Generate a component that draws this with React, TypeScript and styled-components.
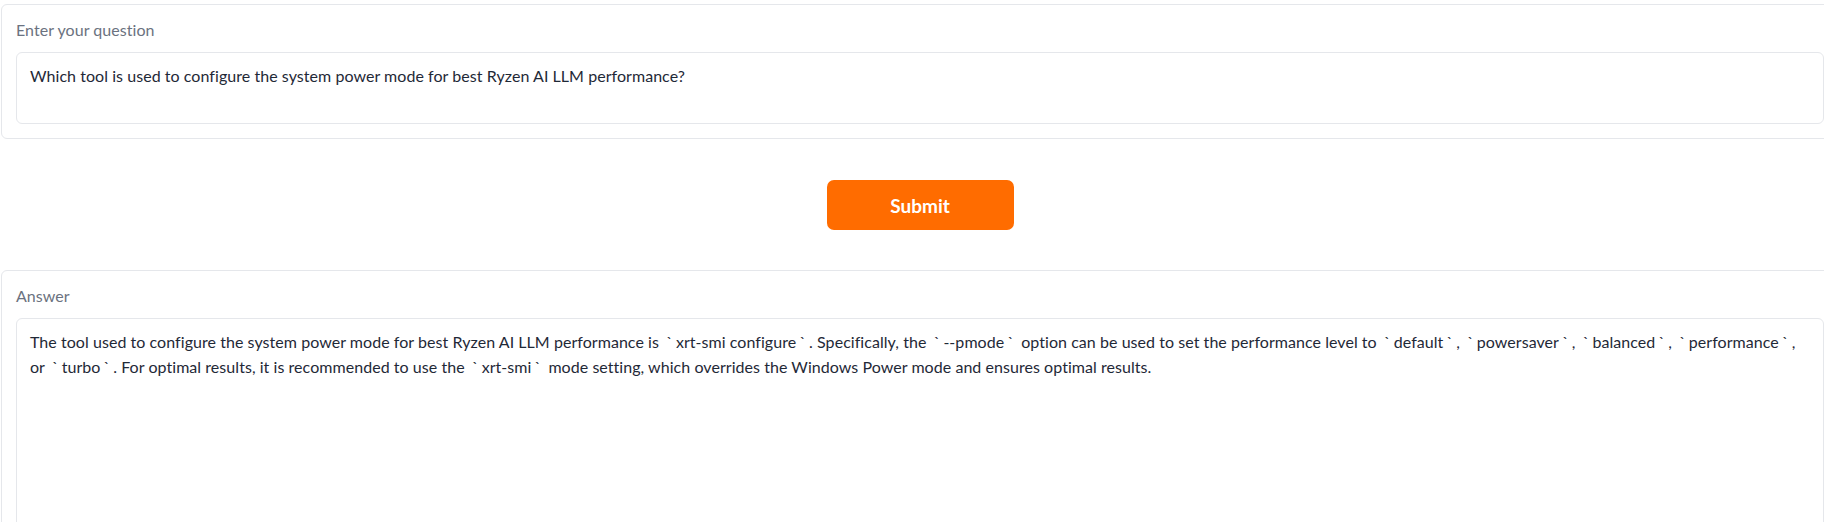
import React from "react";
import styled, { createGlobalStyle } from "styled-components";

const GlobalStyle = createGlobalStyle`
  html, body {
    margin: 0;
    padding: 0;
    background: #ffffff;
    overflow: hidden;
  }
  body {
    font-family: "Lato", "Noto Sans", sans-serif;
  }
  * { box-sizing: border-box; }
`;

const Page = styled.div`
  display: flex;
  flex-direction: column;
  width: 1838px;
  margin-left: 1px;
  padding-top: 4px;
`;

const Block = styled.div`
  display: flex;
  flex-direction: column;
  gap: 10px;
  border: 1px solid #e5e7eb;
  border-radius: 6px;
  padding: 13px 14px 14px 14px;
  background: #ffffff;
`;

const Label = styled.label`
  display: block;
  font-family: "Lato", sans-serif;
  font-size: 16px;
  letter-spacing: 0.05px;
  line-height: 24px;
  color: #6b7280;
`;

const Field = styled.div<{ $height: number }>`
  display: block;
  width: 100%;
  height: ${(p) => p.$height}px;
  margin: 0;
  padding: 10px 18px 10px 13px;
  border: 1px solid #e5e7eb;
  border-radius: 6px;
  background: #ffffff;
  font-family: "Lato", sans-serif;
  font-size: 16px;
  letter-spacing: 0.05px;
  line-height: 25px;
  color: #1f2937;
  white-space: pre-wrap;
  overflow: hidden;
`;

const Tick = styled.span`
  padding: 0 3.2px;
`;

const ButtonRow = styled.div`
  display: flex;
  justify-content: center;
  padding: 41px 0 40px;
`;

const SubmitButton = styled.button`
  width: 187px;
  height: 50px;
  border: none;
  border-radius: 7px;
  background: #ff6c00;
  color: #ffffff;
  font-family: "Lato", sans-serif;
  font-weight: 700;
  font-size: 19px;
  cursor: pointer;
`;

const question =
  "Which tool is used to configure the system power mode for best Ryzen AI LLM performance?";

const answer =
  "The tool used to configure the system power mode for best Ryzen AI LLM performance is `xrt-smi configure`. Specifically, the `--pmode` option can be used to set the performance level to `default`, `powersaver`, `balanced`, `performance`, or `turbo`. For optimal results, it is recommended to use the `xrt-smi` mode setting, which overrides the Windows Power mode and ensures optimal results.";

function withTicks(text: string) {
  const parts = text.split("`");
  return parts.map((part, i) => (
    <React.Fragment key={i}>
      {i > 0 && <Tick>`</Tick>}
      {part}
    </React.Fragment>
  ));
}

export default function App() {
  return (
    <>
      <GlobalStyle />
      <Page>
        <Block>
          <Label>Enter your question</Label>
          <Field $height={72}>{question}</Field>
        </Block>
        <ButtonRow>
          <SubmitButton type="button">Submit</SubmitButton>
        </ButtonRow>
        <Block>
          <Label>Answer</Label>
          <Field $height={320}>{withTicks(answer)}</Field>
        </Block>
      </Page>
    </>
  );
}
